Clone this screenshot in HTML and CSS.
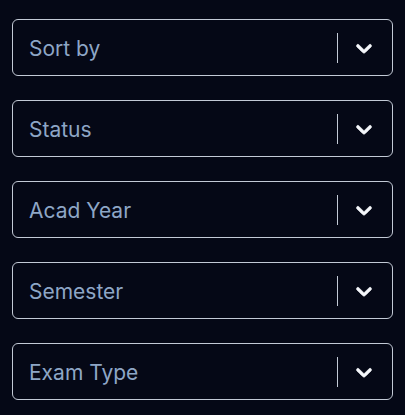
FILE: index.html
```html
<!DOCTYPE html>
<html>
<head>
<meta charset="utf-8">
<link rel="stylesheet" href="styles.css">
</head>
<body>
<div class="filters">
  <div class="select"><span class="placeholder">Sort by</span><span class="sep"></span><svg class="chev" viewBox="0 0 20 20"><path d="M4.516 7.548c0.436-0.446 1.043-0.481 1.576 0l3.908 3.747 3.908-3.747c0.533-0.481 1.141-0.446 1.574 0 0.436 0.445 0.408 1.197 0 1.615-0.406 0.418-4.695 4.502-4.695 4.502-0.217 0.223-0.502 0.335-0.787 0.335s-0.57-0.112-0.789-0.335c0 0-4.287-4.084-4.695-4.502s-0.436-1.17 0-1.615z"/></svg></div>
  <div class="select"><span class="placeholder">Status</span><span class="sep"></span><svg class="chev" viewBox="0 0 20 20"><path d="M4.516 7.548c0.436-0.446 1.043-0.481 1.576 0l3.908 3.747 3.908-3.747c0.533-0.481 1.141-0.446 1.574 0 0.436 0.445 0.408 1.197 0 1.615-0.406 0.418-4.695 4.502-4.695 4.502-0.217 0.223-0.502 0.335-0.787 0.335s-0.57-0.112-0.789-0.335c0 0-4.287-4.084-4.695-4.502s-0.436-1.170 0-1.615z"/></svg></div>
  <div class="select"><span class="placeholder">Acad Year</span><span class="sep"></span><svg class="chev" viewBox="0 0 20 20"><path d="M4.516 7.548c0.436-0.446 1.043-0.481 1.576 0l3.908 3.747 3.908-3.747c0.533-0.481 1.141-0.446 1.574 0 0.436 0.445 0.408 1.197 0 1.615-0.406 0.418-4.695 4.502-4.695 4.502-0.217 0.223-0.502 0.335-0.787 0.335s-0.57-0.112-0.789-0.335c0 0-4.287-4.084-4.695-4.502s-0.436-1.170 0-1.615z"/></svg></div>
  <div class="select"><span class="placeholder">Semester</span><span class="sep"></span><svg class="chev" viewBox="0 0 20 20"><path d="M4.516 7.548c0.436-0.446 1.043-0.481 1.576 0l3.908 3.747 3.908-3.747c0.533-0.481 1.141-0.446 1.574 0 0.436 0.445 0.408 1.197 0 1.615-0.406 0.418-4.695 4.502-4.695 4.502-0.217 0.223-0.502 0.335-0.787 0.335s-0.57-0.112-0.789-0.335c0 0-4.287-4.084-4.695-4.502s-0.436-1.170 0-1.615z"/></svg></div>
  <div class="select"><span class="placeholder">Exam Type</span><span class="sep"></span><svg class="chev" viewBox="0 0 20 20"><path d="M4.516 7.548c0.436-0.446 1.043-0.481 1.576 0l3.908 3.747 3.908-3.747c0.533-0.481 1.141-0.446 1.574 0 0.436 0.445 0.408 1.197 0 1.615-0.406 0.418-4.695 4.502-4.695 4.502-0.217 0.223-0.502 0.335-0.787 0.335s-0.57-0.112-0.789-0.335c0 0-4.287-4.084-4.695-4.502s-0.436-1.170 0-1.615z"/></svg></div>
</div>
</body>
</html>
```
FILE: styles.css
```css
html, body {
  margin: 0;
  background: #050816;
}
body {
  width: 405px;
  height: 415px;
  overflow: hidden;
  font-family: Inter, "Noto Sans", sans-serif;
}
.filters {
  display: flex;
  flex-direction: column;
  gap: 24px;
  padding: 19px 12px 0 12px;
}
.select {
  box-sizing: border-box;
  height: 57px;
  border: 1px solid #c3cad6;
  border-radius: 6px;
  display: flex;
  align-items: center;
  padding: 0 15px 0 16px;
}
.placeholder {
  flex: 1;
  font-size: 21px;
  color: #8ea6c6;
  padding-top: 2px;
}
.sep {
  width: 1px;
  height: 30px;
  background: #c3cad6;
  margin-right: 13px;
}
.chev {
  width: 26px;
  height: 26px;
  fill: #f4f6fa;
  stroke: #f4f6fa;
  stroke-width: 0.4;
}
```
